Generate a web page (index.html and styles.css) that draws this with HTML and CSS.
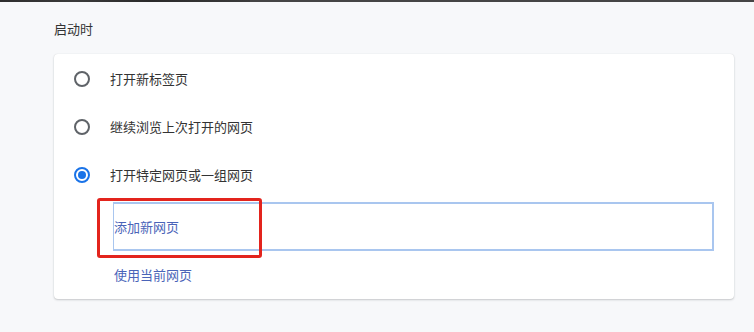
FILE: index.html
```html
<!DOCTYPE html>
<html lang="zh-CN">
<head>
<meta charset="utf-8">
<title>启动时</title>
<link rel="stylesheet" href="styles.css">
</head>
<body>
<div class="topbar"><div class="topbar-left"></div></div>
<main class="section">
  <h2 class="section-title">启动时</h2>
  <div class="card">
    <label class="option">
      <span class="radio"></span>
      <span class="option-label">打开新标签页</span>
    </label>
    <label class="option">
      <span class="radio"></span>
      <span class="option-label">继续浏览上次打开的网页</span>
    </label>
    <label class="option">
      <span class="radio radio-checked"></span>
      <span class="option-label">打开特定网页或一组网页</span>
    </label>
    <div class="pages">
      <div class="add-page">添加新网页</div>
      <div class="use-current">使用当前网页</div>
    </div>
    <div class="highlight"></div>
  </div>
</main>
</body>
</html>
```

FILE: styles.css
```css
html, body {
  margin: 0;
  padding: 0;
}
body {
  background: #f7f8fa;
  font-family: "Noto Sans CJK SC", "Noto Sans", "Liberation Sans", sans-serif;
  font-size: 13px;
  color: #333333;
  width: 754px;
  height: 332px;
  overflow: hidden;
}
.topbar {
  height: 2px;
  background: #454545;
  display: flex;
}
.topbar-left {
  width: 250px;
  background: linear-gradient(90deg, #2e2e2e, #3a3a3a 30%, #2a2a2a 60%, #3b3b3b);
}
.section {
  padding-left: 54px;
}
.section-title {
  margin: 0;
  padding-top: 17px;
  font-size: 13px;
  font-weight: normal;
  line-height: 20px;
  color: #333333;
}
.card {
  position: relative;
  margin-top: 15px;
  width: 680px;
  height: 245px;
  box-sizing: border-box;
  background: #ffffff;
  border-radius: 4px;
  box-shadow: 0 1px 2px rgba(60, 64, 67, 0.25), 0 0 1px rgba(60, 64, 67, 0.15);
  padding-top: 1px;
}
.option {
  display: flex;
  align-items: center;
  height: 48px;
  padding-left: 20px;
  gap: 20px;
}
.radio {
  width: 16px;
  height: 16px;
  box-sizing: border-box;
  border: 2px solid #5f6368;
  border-radius: 50%;
  display: flex;
  align-items: center;
  justify-content: center;
}
.radio-checked {
  border-color: #1a73e8;
}
.radio-checked::after {
  content: "";
  width: 8px;
  height: 8px;
  border-radius: 50%;
  background: #1a73e8;
}
.option-label {
  line-height: 20px;
  color: #333333;
}
.pages {
  padding-left: 59px;
  padding-right: 20px;
}
.add-page {
  margin-top: 3px;
  height: 49px;
  box-sizing: border-box;
  border: 2px solid #a9c6ef;
  border-left-width: 1px;
  display: flex;
  align-items: center;
  color: #4a64b8;
  line-height: 20px;
}
.use-current {
  margin-top: 14px;
  padding-left: 1px;
  line-height: 20px;
  color: #4a64b8;
}
.highlight {
  position: absolute;
  left: 43px;
  top: 144px;
  width: 165px;
  height: 60px;
  box-sizing: border-box;
  border: 3px solid #e3241d;
  border-radius: 3px;
}
```
